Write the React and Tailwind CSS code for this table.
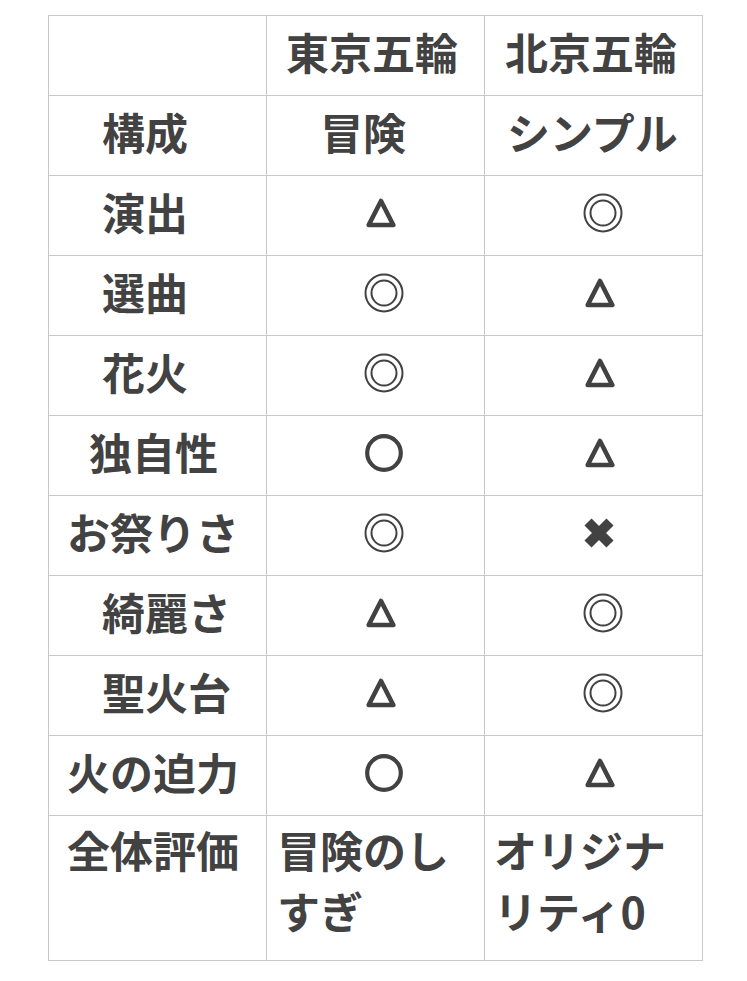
import React from "react";

const C = "#424242";

function Double() {
  return (
    <svg width="40" height="40" viewBox="0 0 40 40" aria-label="◎">
      <circle cx="20" cy="20" r="18.5" fill="none" stroke={C} strokeWidth="2" />
      <circle cx="20" cy="20" r="12.5" fill="none" stroke={C} strokeWidth="2" />
    </svg>
  );
}
function Circle() {
  return (
    <svg width="38" height="38" viewBox="0 0 38 38" aria-label="○">
      <circle cx="19" cy="19" r="16.8" fill="none" stroke={C} strokeWidth="4.2" />
    </svg>
  );
}
function Tri() {
  return (
    <svg width="30" height="30" viewBox="0 0 30 30" aria-label="△">
      <path d="M15 3 L27.3 27 L2.7 27 Z" fill="none" stroke={C} strokeWidth="4.6" strokeLinejoin="round" />
    </svg>
  );
}
function Cross() {
  return (
    <svg width="34" height="34" viewBox="0 0 34 34" aria-label="✖">
      <path d="M6 6 L28 28 M28 6 L6 28" fill="none" stroke={C} strokeWidth="10" strokeLinecap="butt" />
    </svg>
  );
}

const sym = {
  "◎": <Double />,
  "○": <Circle />,
  "△": <Tri />,
  "✖": <Cross />,
};

function SymCell({ s, center }) {
  return (
    <td className="border border-[#c9c9c9] p-0 h-[80px] align-middle">
      <div className={"flex items-center justify-center pb-[6px] " + center}>{sym[s]}</div>
    </td>
  );
}

function TextCell({ children, pl }) {
  return (
    <td className="border border-[#c9c9c9] p-0 h-[80px] align-middle">
      <div className={"whitespace-nowrap leading-[60px] pb-[10px] " + pl}>{children}</div>
    </td>
  );
}

export default function App() {
  return (
    <div className="bg-white w-[747px] h-[981px] pt-[15px] pl-[48px]" style={{ fontFamily: '"Noto Sans CJK JP", "Noto Sans", sans-serif' }}>
      <table className="border-collapse table-fixed w-[654px] text-[43px] font-semibold text-[#424242]">
        <colgroup>
          <col className="w-[218px]" />
          <col className="w-[218px]" />
          <col className="w-[218px]" />
        </colgroup>
        <tbody>
          <tr>
            <td className="border border-[#c9c9c9] p-0 h-[80px]"></td>
            <TextCell pl="pl-[19px]">東京五輪</TextCell>
            <TextCell pl="pl-[20px]">北京五輪</TextCell>
          </tr>
          <tr>
            <TextCell pl="pl-[53px]">構成</TextCell>
            <TextCell pl="pl-[53px]">冒険</TextCell>
            <TextCell pl="pl-[22px]">シンプル</TextCell>
          </tr>
          <tr>
            <TextCell pl="pl-[53px]">演出</TextCell>
            <SymCell s="△" center="pl-[10px]" />
            <SymCell s="◎" center="pl-[19px]" />
          </tr>
          <tr>
            <TextCell pl="pl-[53px]">選曲</TextCell>
            <SymCell s="◎" center="pl-[16px]" />
            <SymCell s="△" center="pl-[12px]" />
          </tr>
          <tr>
            <TextCell pl="pl-[53px]">花火</TextCell>
            <SymCell s="◎" center="pl-[16px]" />
            <SymCell s="△" center="pl-[12px]" />
          </tr>
          <tr>
            <TextCell pl="pl-[40px]">独自性</TextCell>
            <SymCell s="○" center="pl-[17px]" />
            <SymCell s="△" center="pl-[12px]" />
          </tr>
          <tr>
            <TextCell pl="pl-[18px]">お祭りさ</TextCell>
            <SymCell s="◎" center="pl-[16px]" />
            <SymCell s="✖" center="pl-[11px]" />
          </tr>
          <tr>
            <TextCell pl="pl-[53px]">綺麗さ</TextCell>
            <SymCell s="△" center="pl-[10px]" />
            <SymCell s="◎" center="pl-[19px]" />
          </tr>
          <tr>
            <TextCell pl="pl-[53px]">聖火台</TextCell>
            <SymCell s="△" center="pl-[10px]" />
            <SymCell s="◎" center="pl-[19px]" />
          </tr>
          <tr>
            <TextCell pl="pl-[18px]">火の迫力</TextCell>
            <SymCell s="○" center="pl-[17px]" />
            <SymCell s="△" center="pl-[12px]" />
          </tr>
          <tr>
            <td className="border border-[#c9c9c9] p-0 h-[145px] align-top">
              <div className="pl-[18px] pt-[3px] leading-[60px]">全体評価</div>
            </td>
            <td className="border border-[#c9c9c9] p-0 h-[145px] align-top">
              <div className="pl-[10px] pr-[8px] pt-[3px] leading-[61px]">冒険のしすぎ</div>
            </td>
            <td className="border border-[#c9c9c9] p-0 h-[145px] align-top">
              <div className="pl-[9px] pr-[8px] pt-[3px] leading-[61px]">オリジナリティ0</div>
            </td>
          </tr>
        </tbody>
      </table>
    </div>
  );
}
